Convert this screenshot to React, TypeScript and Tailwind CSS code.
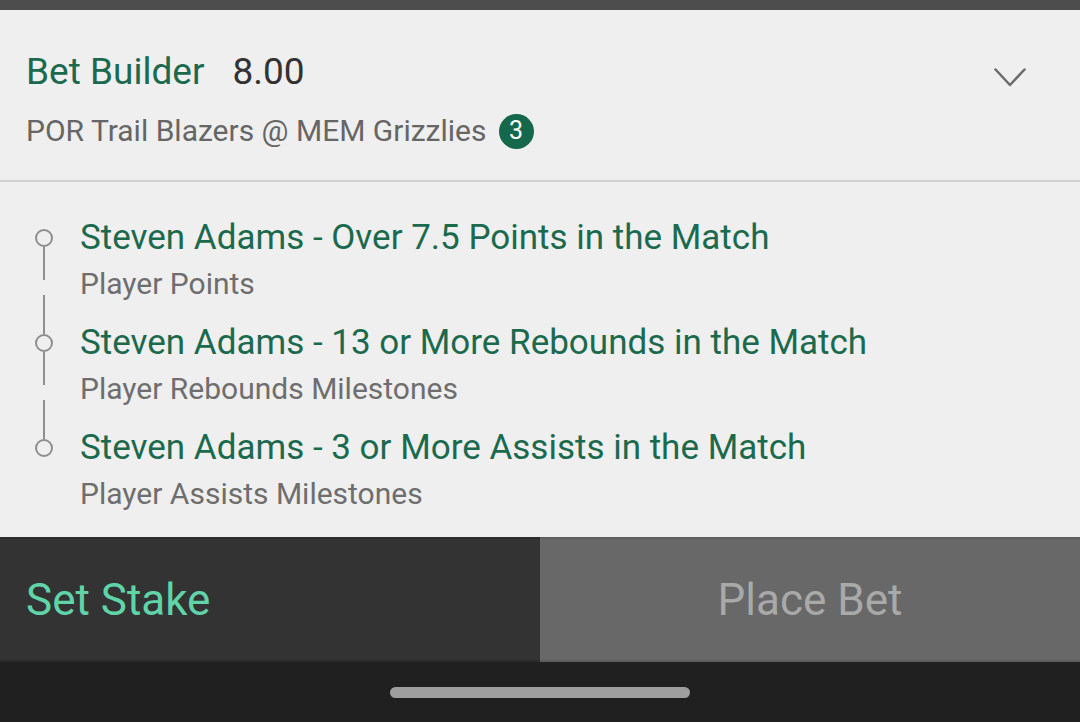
import React from 'react';

const legs = [
  { title: 'Steven Adams - Over 7.5 Points in the Match', market: 'Player Points' },
  { title: 'Steven Adams - 13 or More Rebounds in the Match', market: 'Player Rebounds Milestones' },
  { title: 'Steven Adams - 3 or More Assists in the Match', market: 'Player Assists Milestones' },
];

const Chevron: React.FC = () => (
  <svg width="32" height="20" viewBox="0 0 32 20" fill="none">
    <path d="M1.5 1.5 L16 17 L30.5 1.5" stroke="#6b6b6b" strokeWidth="2.5" strokeLinecap="round" strokeLinejoin="round" />
  </svg>
);

const LegRow: React.FC<{ title: string; market: string; first: boolean; last: boolean }> = ({ title, market, first, last }) => (
  <div className="flex h-[105px]">
    <div className="w-[80px] flex flex-col items-center pl-[8px] shrink-0">
      <div className={`w-[2px] h-[39px] ${first ? 'bg-transparent' : 'bg-[#8f8f8f]'}`} />
      <div className="w-[18px] h-[18px] rounded-full border-2 border-[#8f8f8f] shrink-0" />
      <div className={`w-[2px] h-[33px] ${last ? 'bg-transparent' : 'bg-[#8f8f8f]'}`} />
    </div>
    <div className="flex flex-col pt-[28px]">
      <div className="text-[35px] leading-[40px] text-[#1b6a4d]">{title}</div>
      <div className="text-[30px] leading-[34px] text-[#6e6e6e] mt-[9px]">{market}</div>
    </div>
  </div>
);

const App: React.FC = () => {
  return (
    <div className="w-[1080px] h-[722px] flex flex-col bg-[#efefef] overflow-hidden" style={{ fontFamily: 'Roboto, "Noto Sans", sans-serif' }}>
      <div className="h-[10px] bg-[#4d4d4d] shrink-0" />

      <div className="h-[172px] shrink-0 flex justify-between px-[26px] border-b-2 border-[#d0d0d0]">
        <div className="flex flex-col pt-[40px]">
          <div className="flex items-baseline gap-[28px]">
            <span className="text-[37px] leading-[44px] text-[#1b6a4d]">Bet Builder</span>
            <span className="text-[37px] leading-[44px] text-[#333333]">8.00</span>
          </div>
          <div className="flex items-center gap-[12px] mt-[18px]">
            <span className="text-[30px] leading-[38px] text-[#666666]">POR Trail Blazers @ MEM Grizzlies</span>
            <span className="w-[35px] h-[35px] rounded-full bg-[#16684c] text-white text-[25px] flex items-center justify-center">3</span>
          </div>
        </div>
        <div className="pt-[58px] pr-[28px]">
          <Chevron />
        </div>
      </div>

      <div className="flex-1 flex flex-col pt-[8px]">
        {legs.map((l, i) => (
          <LegRow key={i} title={l.title} market={l.market} first={i === 0} last={i === legs.length - 1} />
        ))}
      </div>

      <div className="h-[125px] shrink-0 flex">
        <div className="w-[540px] bg-[#333333] flex items-center px-[26px] border-y-2 border-[#2b2b2b]">
          <span className="text-[44px] text-[#5fd4a9]">Set Stake</span>
        </div>
        <div className="flex-1 bg-[#686868] flex items-center justify-center border-y-2 border-[#5e5e5e]">
          <span className="text-[44px] text-[#a9a9a9]">Place Bet</span>
        </div>
      </div>

      <div className="h-[60px] shrink-0 bg-[#202020] flex items-center justify-center">
        <div className="w-[300px] h-[11px] rounded-full bg-[#9e9e9e]" />
      </div>
    </div>
  );
};

export default App;
